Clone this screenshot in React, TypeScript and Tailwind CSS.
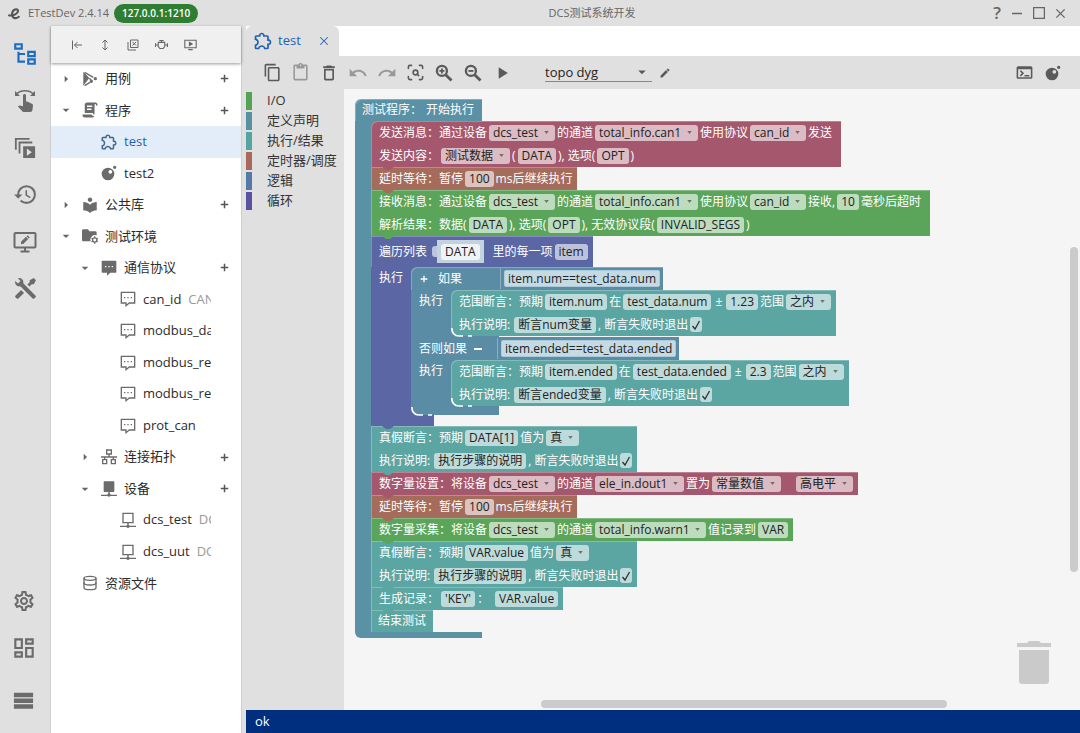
import React from "react";
import {
  MdArrowDropDown, MdArrowRight, MdContentCopy, MdContentPaste, MdDeleteOutline, MdEdit,
  MdHistory, MdLocalLibrary, MdOutlineDashboard, MdOutlineSettings, MdPlayArrow, MdRedo, MdSwipe,
  MdTerminal, MdUndo,
} from "react-icons/md";
import { LuDatabase, LuScanSearch } from "react-icons/lu";

type IconProps = { className?: string };

const Path = ({ d, className, rule }: IconProps & { d: string; rule?: "evenodd" }) => (
  <svg viewBox="0 0 24 24" className={className} fill="currentColor" aria-hidden="true">
    <path d={d} fillRule={rule} />
  </svg>
);

const Line = ({ className, children, w = 2 }: IconProps & { children: React.ReactNode; w?: number }) => (
  <svg viewBox="0 0 24 24" className={className} fill="none" stroke="currentColor" strokeWidth={w} aria-hidden="true">
    {children}
  </svg>
);

const Plus = (p: IconProps) => <Line {...p} w={4}><path d="M12 2v20M2 12h20" /></Line>;
const Magnify = ({ plus, ...p }: IconProps & { plus?: boolean }) => (
  <Line {...p}>
    <circle cx="9.500" cy="9.500" r="6" strokeWidth="2.800" />
    <path d="M14 14l7 7" strokeWidth="3.400" />
    <path d={plus ? "M6.500 9.500h6M9.500 6.500v6" : "M6.500 9.500h6"} strokeWidth="2.200" />
  </Line>
);
const Puzzle = (p: IconProps) => (
  <Path {...p} d="M22,13.5C22,15.26 20.7,16.72 19,16.96V20A2,2 0 0,1 17,22H13.2V21.7A2.7,2.7 0 0,0 10.5,19C9,19 7.8,20.21 7.8,21.7V22H4A2,2 0 0,1 2,20V16.2H2.3C3.79,16.2 5,15 5,13.5C5,12 3.79,10.8 2.3,10.8H2V7A2,2 0 0,1 4,5H7.04C7.28,3.3 8.74,2 10.5,2C12.26,2 13.72,3.3 13.96,5H17A2,2 0 0,1 19,7V10.04C20.7,10.28 22,11.74 22,13.5M17,15H18.5A1.5,1.5 0 0,0 20,13.5A1.5,1.5 0 0,0 18.5,12H17V7H12V5.5A1.5,1.5 0 0,0 10.5,4A1.5,1.5 0 0,0 9,5.5V7H4V9.12C5.76,9.8 7,11.5 7,13.5C7,15.5 5.75,17.2 4,17.88V20H6.12C6.8,18.25 8.5,17 10.5,17C12.5,17 14.2,18.25 14.88,20H17V15Z" />
);
const FileTree = (p: IconProps) => (
  <Path {...p} d="M12 13H7v5h5v2H5V10h2v1h5v2M8 4v2H4V4h4m2-2H2v6h8V2m10 9v2h-4v-2h4m2-2h-8v6h8V9m-2 9v2h-4v-2h4m2-2h-8v6h8v-6z" />
);
const PlayStack = (p: IconProps) => (
  <svg viewBox="0 0 24 24" className={p.className} fill="none" stroke="currentColor" strokeWidth="2" aria-hidden="true">
    <path d="M2 14V2h15M6 18V6h14" />
    <path fill="currentColor" stroke="none" fillRule="evenodd" d="M10 10h13v13H10zM14 12.500v8l5.500-4z" />
  </svg>
);
const MonitorEdit = (p: IconProps) => (
  <svg viewBox="0 0 24 24" className={p.className} fill="none" stroke="currentColor" strokeWidth="2" aria-hidden="true">
    <rect x="1.500" y="3" width="21" height="14.500" rx="1" />
    <path d="M12 17v4M7.500 21.500h9" />
    <path fill="currentColor" stroke="none" d="M8 14v-2.200l5-5 2.200 2.200-5 5zM13.600 6.200l1-1 2.200 2.200-1 1z" />
  </svg>
);
const Tools = (p: IconProps) => (
  <Path {...p} d="M21.71 20.29L20.29 21.71A1 1 0 0 1 18.88 21.71L7 9.85A3.81 3.81 0 0 1 6 10A4 4 0 0 1 2.22 4.7L4.76 7.24L5.29 6.71L6.71 5.29L7.24 4.76L4.7 2.22A4 4 0 0 1 10 6A3.81 3.81 0 0 1 9.85 7L21.71 18.88A1 1 0 0 1 21.71 20.29M2.29 18.88A1 1 0 0 0 2.29 20.29L3.71 21.71A1 1 0 0 0 5.12 21.71L10.59 16.25L7.76 13.42M20 2L16 4V6L13.83 8.17L15.83 10.17L18 8H20L22 4Z" />
);
const Bars = (p: IconProps) => <Path {...p} d="M2 4h20v4.500H2zM2 10h20v4.500H2zM2 16h20v4.500H2z" />;
const Cases = (p: IconProps) => (
  <svg viewBox="0 0 24 24" className={p.className} aria-hidden="true">
    <path fill="currentColor" d="M2 1l9 9.500L2 22z" />
    <path fill="none" stroke="currentColor" strokeWidth="2" d="M4 2l13 7.500M4 22l8-5M11 11l4 4" />
    <path fill="currentColor" d="M20 9a2.200 2.200 0 1 1 0 5 2.200 2.200 0 0 1 0-5zM14 13a2.200 2.200 0 1 1 0 5 2.200 2.200 0 0 1 0-5z" />
  </svg>
);
const Script = (p: IconProps) => (
  <Path {...p} d="M17.8 20C17.4 21.2 16.3 22 15 22H5C3.3 22 2 20.7 2 19V18H5L14.2 18C14.6 19.2 15.7 20 17 20H17.8M19 2C20.7 2 22 3.3 22 5V6H20V5C20 4.4 19.6 4 19 4S18 4.4 18 5V18H17C16.4 18 16 17.6 16 17V16H5V5C5 3.3 6.3 2 8 2H19M8 6V8H15V6H8M8 10V12H14V10H8Z" />
);
const Lua = (p: IconProps) => (
  <Path {...p} rule="evenodd" d="M10.500 4a9.500 9.500 0 1 0 0 19 9.500 9.500 0 0 0 0-19zM14 7.500a2.800 2.800 0 1 1 0 5.600 2.800 2.800 0 0 1 0-5.600zM20.500 1a2.500 2.500 0 1 0 0 5 2.500 2.500 0 0 0 0-5z" />
);
const FolderCog = (p: IconProps) => (
  <svg viewBox="0 0 24 24" className={p.className} aria-hidden="true">
    <path fill="currentColor" d="M2 2h7l2 3h9a2 2 0 0 1 2 2v4a7 7 0 0 0-9 9H2a2 2 0 0 1-2-2V4a2 2 0 0 1 2-2z" />
    <circle cx="19" cy="18" r="3.200" fill="none" stroke="currentColor" strokeWidth="2" />
    <path stroke="currentColor" strokeWidth="2" d="M19 12.500v2M19 21.500v2M14.300 15.300l1.700 1M22 19.700l1.700 1M14.300 20.700l1.700-1M22 16.300l1.700-1" />
  </svg>
);
const Message = (p: IconProps) => (
  <Path {...p} rule="evenodd" d="M2 1h20a1 1 0 0 1 1 1v16a1 1 0 0 1-1 1h-8l-5 4.500V19H2a1 1 0 0 1-1-1V2a1 1 0 0 1 1-1zM6 9v2h2V9zM11 9v2h2V9zM16 9v2h2V9z" />
);
const MessageOutline = (p: IconProps) => (
  <Line {...p}>
    <path d="M2 2h20v16h-8l-5 4v-4H2z" />
    <path d="M6 10h2M11 10h2M16 10h2" />
  </Line>
);
const Sitemap = (p: IconProps) => (
  <Line {...p}>
    <path d="M8.500 1.500h7v6h-7zM2.500 16h6v6h-6zM15.500 16h6v6h-6zM12 8v4M0 12h24M5.500 12v4M18.500 12v4" />
  </Line>
);
const Device = (p: IconProps) => (
  <svg viewBox="0 0 24 24" className={p.className} fill="currentColor" stroke="currentColor" strokeWidth="2" aria-hidden="true">
    <path d="M5 1.500h14v14H5z" strokeLinejoin="round" />
    <path d="M12 16v4M0 21.500h24" />
    <circle cx="12" cy="21" r="1.500" />
  </svg>
);
const DeviceOutline = (p: IconProps) => (
  <Line {...p}>
    <path d="M4.500 2h15v14h-15zM12 16v4M0 21.500h24" />
    <circle cx="12" cy="21.500" r="1.500" fill="currentColor" />
  </Line>
);
const Logo = (p: IconProps) => (
  <svg viewBox="0 0 24 24" className={p.className} fill="none" stroke="currentColor" strokeWidth="3.800" strokeLinecap="round" aria-hidden="true">
    <path d="M2 15.500C10 17 19 12 18.500 7 18 2 8 3.500 7.500 13 7.300 21 14 22.500 20 18" />
  </svg>
);

const CollapseLeft = (p: IconProps) => <Line {...p}><path d="M3 3v18M22 12H7M13 6l-6 6 6 6" /></Line>;
const ExpandY = (p: IconProps) => <Line {...p}><path d="M12 2v20M7 7l5-5 5 5M7 17l5 5 5-5" /></Line>;
const CloseBoxes = (p: IconProps) => <Line {...p}><path d="M7 2h15v15H7zM2 6v16h16M11 6l7 7M18 6l-7 7" /></Line>;
const Bug = (p: IconProps) => (
  <Line {...p}><path d="M8 4.500h8M12 5v3M6 8h12v8l-3 3.500H9L6 16zM6 13H2M1 9.500v7M18 13h4M23 9.500v7" /></Line>
);
const PlayMonitor = (p: IconProps) => (
  <Line {...p}><path d="M1.500 4h21v14h-21zM8 21.500h8" /><path d="M10 8l5 3-5 3z" fill="currentColor" /></Line>
);

/* ---------- tree ---------- */

type Node = {
  level: 0 | 1 | 2;
  icon: (p: IconProps) => React.ReactNode;
  label: string;
  open?: boolean;
  note?: string;
  add?: boolean;
  active?: boolean;
  padded?: boolean;
};

const nodes: Node[] = [
  { level: 0, icon: Cases, label: "用例", open: false, add: true },
  { level: 0, icon: Script, label: "程序", open: true, add: true, padded: true },
  { level: 1, icon: Puzzle, label: "test", active: true, padded: true },
  { level: 1, icon: Lua, label: "test2" },
  { level: 0, icon: (p) => <MdLocalLibrary {...p} />, label: "公共库", open: false, add: true, padded: true },
  { level: 0, icon: FolderCog, label: "测试环境", open: true },
  { level: 1, icon: Message, label: "通信协议", open: true, add: true },
  { level: 2, icon: MessageOutline, label: "can_id", note: "CAN" },
  { level: 2, icon: MessageOutline, label: "modbus_da" },
  { level: 2, icon: MessageOutline, label: "modbus_re" },
  { level: 2, icon: MessageOutline, label: "modbus_re" },
  { level: 2, icon: MessageOutline, label: "prot_can" },
  { level: 1, icon: Sitemap, label: "连接拓扑", open: false, add: true },
  { level: 1, icon: Device, label: "设备", open: true, add: true },
  { level: 2, icon: DeviceOutline, label: "dcs_test", note: "DCS" },
  { level: 2, icon: DeviceOutline, label: "dcs_uut", note: "DCS" },
  { level: 0, icon: (p) => <LuDatabase {...p} />, label: "资源文件" },
];
const indent = ["pl-[6px]", "pl-[25px]", "pl-[44px]"];

function TreeRow({ n }: { n: Node }) {
  return (
    <li className={`flex flex-1 items-center gap-[7px] pr-[11px] ${indent[n.level]} ${n.active ? "bg-[#e3edf9] text-[#1d62b5]" : "text-[#2b2b2b]"}`}>
      <span className="flex w-[18px] shrink-0 justify-center text-[#666]">
        {n.open === true && <MdArrowDropDown className="size-4" />}
        {n.open === false && <MdArrowRight className="size-4" />}
      </span>
      <span className={`shrink-0 ${n.active ? "text-[#44688f]" : "text-[#6b6b6b]"}`}>
        {n.icon({ className: n.padded ? "size-[18px] -mx-px" : "size-4" })}
      </span>
      <span className="min-w-0 flex-1 overflow-hidden whitespace-nowrap">
        {n.label}
        {n.note && <span className="ml-[7px] text-[#999]">{n.note}</span>}
      </span>
      {n.add ? (
        <button aria-label={`添加${n.label}`} className="flex w-3 shrink-0 justify-center text-[#555]"><Plus className="size-[9px]" /></button>
      ) : (
        <span className="w-3 shrink-0" />
      )}
    </li>
  );
}

/* ---------- blocks ---------- */

const tones = {
  start: { bg: "bg-[#5b91a5]", fill: "fill-[#5b91a5]" },
  send: { bg: "bg-[#a5586d]", fill: "fill-[#a5586d]" },
  wait: { bg: "bg-[#a56b5b]", fill: "fill-[#a56b5b]" },
  io: { bg: "bg-[#5ba55b]", fill: "fill-[#5ba55b]" },
  loop: { bg: "bg-[#5b67a5]", fill: "fill-[#5b67a5]" },
  logic: { bg: "bg-[#5b8ca5]", fill: "fill-[#5b8ca5]" },
  step: { bg: "bg-[#5ba5a2]", fill: "fill-[#5ba5a2]" },
};
type Tone = keyof typeof tones;

const edge = "shadow-[inset_1px_1px_0_rgba(255,255,255,0.25)]";

const T = ({ children }: { children: React.ReactNode }) => <span className="text-white">{children}</span>;

const Drop = ({ v, label = v }: { v: string; label?: string }) => (
  <span className="grid items-center">
    <select aria-label={label} defaultValue={v} className="col-start-1 row-start-1 h-4 appearance-none rounded-[3px] bg-white/60 pr-4 pl-1 leading-4 text-[#222]">
      <option>{v}</option>
    </select>
    <svg viewBox="0 0 6 4" className="pointer-events-none col-start-1 row-start-1 mr-[6px] h-[3px] w-[5px] justify-self-end fill-black/45" aria-hidden="true">
      <path d="M0 0h6L3 4z" />
    </svg>
  </span>
);

const Field = ({ v, label = v }: { v: string; label?: string }) => (
  <input aria-label={label} defaultValue={v} className="field-sizing-content h-4 rounded-[3px] bg-white/60 px-1 leading-4 text-[#222]" />
);

const Check = () => (
  <span className="grid place-items-center">
    <input type="checkbox" defaultChecked aria-label="断言失败时退出" className="col-start-1 row-start-1 h-[15px] w-3 appearance-none rounded-[3px] bg-white/60" />
    <svg viewBox="0 0 12 12" className="pointer-events-none col-start-1 row-start-1 size-3 fill-none stroke-[#333]" aria-hidden="true">
      <path d="M2.500 7l2.500 3L9.500 2" strokeWidth="1.300" />
    </svg>
  </span>
);

const Notch = ({ tone }: { tone: Tone }) => (
  <svg viewBox="0 0 12 3" className={`absolute -bottom-[3px] left-[11px] z-10 h-[3px] w-3 ${tones[tone].fill}`} aria-hidden="true">
    <path d="M0 0h12L8 3H4z" />
  </svg>
);

const Shine = () => (
  <svg viewBox="0 0 22 9" className="absolute -bottom-[1px] left-0 z-10 h-[9px] w-[22px] fill-none stroke-white" strokeWidth="1.600" aria-hidden="true">
    <path d="M.8 0Q1 7.800 8 8H12M17 8H21" />
  </svg>
);

const Row = ({ children, className = "h-[23px]" }: { children: React.ReactNode; className?: string }) => (
  <div className={`flex items-center gap-[2px] whitespace-nowrap ${className}`}>{children}</div>
);

type BlockProps = { tone: Tone; under?: Tone; last?: boolean; wide?: boolean; children: React.ReactNode };

function Block({ tone, under, last, wide, children }: BlockProps) {
  return (
    <div className={`relative ${under ? tones[under].bg : ""}`}>
      <div className={`pl-2 ${wide ? "pr-[9px]" : "pr-[5px]"} ${tones[tone].bg} ${edge} ${under ? "rounded-tl-md" : ""} ${last ? "rounded-bl-md" : ""}`}>{children}</div>
      {!last && <Notch tone={tone} />}
      {last && <Shine />}
    </div>
  );
}

function RangeAssert({ expect, target, range, note }: { expect: string; target: string; range: string; note: string }) {
  return (
    <Block tone="step" under="logic" last>
      <Row><T>范围断言：预期</T><Field v={expect} /><T>在</T><Field v={target} /><span className="px-[2px] text-white">±</span><Field v={range} /><T>范围</T><Drop v="之内" /></Row>
      <Row><T>执行说明:</T><span /><Field v={note} /><T>, 断言失败时退出</T><Check /></Row>
    </Block>
  );
}

function BoolAssert({ expect }: { expect: string }) {
  return (
    <Block tone="step">
      <Row><T>真假断言：预期</T><Field v={expect} /><T>值为</T><Drop v="真" /></Row>
      <Row><T>执行说明:</T><span /><Field v="执行步骤的说明" /><T>, 断言失败时退出</T><Check /></Row>
    </Block>
  );
}

const Wait = () => (
  <Block tone="wait"><Row><T>延时等待：暂停</T><Field v="100" label="毫秒" /><T>ms后继续执行</T></Row></Block>
);

const ValueSlot = ({ v }: { v: string }) => (
  <span className="flex h-[21px] items-center border-l border-white/30 px-[3px]">
    <input aria-label={v} defaultValue={v} className="field-sizing-content h-[17px] rounded-[2px] border border-[#a9cbdd] bg-[#c6dae3] px-[3px] leading-4 text-[#222]" />
  </span>
);

const Branch = ({ children }: { children: React.ReactNode }) => (
  <div className="flex">
    <div className={`w-10 pl-2 leading-[22px] text-white ${tones.logic.bg}`}>执行</div>
    <div>{children}</div>
  </div>
);

function IfBlock() {
  return (
    <div className="flex flex-col items-start">
      <div className={tones.loop.bg}>
        <div className={`rounded-tl-md pl-2 ${tones.logic.bg} ${edge}`}>
          <Row>
            <button aria-label="添加分支" className="flex w-[17px] pl-px text-white"><Plus className="size-2" /></button>
            <T>如果</T><span className="w-[34px]" /><ValueSlot v="item.num==test_data.num" />
          </Row>
        </div>
      </div>
      <Branch><RangeAssert expect="item.num" target="test_data.num" range="1.23" note="断言num变量" /></Branch>
      <div className={`h-px w-[88px] ${tones.logic.bg}`} />
      <div className={`pl-2 ${tones.logic.bg}`}>
        <Row>
          <T>否则如果</T>
          <button aria-label="删除分支" className="flex h-3 w-[18px] items-center justify-center"><span className="h-[2px] w-2 bg-white" /></button>
          <span className="w-[6px]" /><ValueSlot v="item.ended==test_data.ended" />
        </Row>
      </div>
      <Branch><RangeAssert expect="item.ended" target="test_data.ended" range="2.3" note="断言ended变量" /></Branch>
      <div className={`relative w-[88px] ${tones.loop.bg}`}>
        <div className={`h-[9px] rounded-bl-md ${tones.logic.bg}`} />
        <Shine />
      </div>
    </div>
  );
}

function Program() {
  return (
    <div className="flex w-max flex-col items-start text-[12px]">
      <div className={`flex h-[22px] w-[127px] items-center rounded-tl-md pl-[7px] whitespace-nowrap ${tones.start.bg} ${edge}`}>
        <T>测试程序：</T><span className="ml-1 text-white">开始执行</span>
      </div>
      <div className="flex">
        <div className={`w-4 ${tones.start.bg}`} />
        <div className="flex flex-col items-start">
          <Block tone="send" under="start" wide>
            <Row><T>发送消息：通过设备</T><Drop v="dcs_test" /><T>的通道</T><Drop v="total_info.can1" /><T>使用协议</T><Drop v="can_id" /><T>发送</T></Row>
            <Row><T>发送内容：</T><Drop v="测试数据" /><T>(</T><Field v="DATA" /><T>), 选项(</T><Field v="OPT" /><T>)</T></Row>
          </Block>
          <Wait />
          <Block tone="io" wide>
            <Row><T>接收消息：通过设备</T><Drop v="dcs_test" /><T>的通道</T><Drop v="total_info.can1" /><T>使用协议</T><Drop v="can_id" /><T>接收,</T><Field v="10" /><T>毫秒后超时</T></Row>
            <Row><T>解析结果：数据(</T><Field v="DATA" /><T>), 选项(</T><Field v="OPT" /><T>), 无效协议段(</T><Field v="INVALID_SEGS" /><T>)</T></Row>
          </Block>
          <div className={`pr-[5px] pl-2 ${tones.loop.bg} ${edge}`}>
            <Row className="h-[31px]">
              <T>遍历列表</T>
              <span className="ml-[3px] flex items-center">
                <span className="h-[11px] w-[5px] rounded-l-[3px] bg-[#b9c6dc]" />
                <span className="flex h-[23px] items-center bg-[#c3d2de] px-1">
                  <input aria-label="列表" defaultValue="DATA" className="field-sizing-content h-4 rounded-[3px] bg-[#eef3f6] px-1 leading-4 text-[#222]" />
                </span>
              </span>
              <span className="ml-[7px] text-white">里的每一项</span>
              <Field v="item" />
            </Row>
          </div>
          <div className="flex">
            <div className={`w-10 pl-2 leading-[22px] text-white ${tones.loop.bg}`}>执行</div>
            <IfBlock />
          </div>
          <div className="relative">
            <div className={`h-[11px] w-[63px] ${tones.loop.bg}`} />
            <Notch tone="loop" />
          </div>
          <BoolAssert expect="DATA[1]" />
          <Block tone="send">
            <Row><T>数字量设置：将设备</T><Drop v="dcs_test" /><T>的通道</T><Drop v="ele_in.dout1" /><T>置为</T><Drop v="常量数值" /><span className="w-[11px]" /><Drop v="高电平" /></Row>
          </Block>
          <Wait />
          <Block tone="io">
            <Row><T>数字量采集：将设备</T><Drop v="dcs_test" /><T>的通道</T><Drop v="total_info.warn1" /><T>值记录到</T><Field v="VAR" /></Row>
          </Block>
          <BoolAssert expect="VAR.value" />
          <Block tone="step"><Row><T>生成记录：</T><Field v="'KEY'" /><span className="pr-1 text-white">：</span><Field v="VAR.value" /></Row></Block>
          <div className={`px-[7px] ${tones.step.bg} ${edge}`}><Row className="h-[22px]"><T>结束测试</T></Row></div>
        </div>
      </div>
      <div className={`h-[6px] w-[127px] rounded-bl-md ${tones.start.bg}`} />
    </div>
  );
}

/* ---------- shell ---------- */

const palette = [
  { name: "I/O", bar: "bg-[#52a352]" },
  { name: "定义声明", bar: "bg-[#5590a3]" },
  { name: "执行/结果", bar: "bg-[#52a5a3]" },
  { name: "定时器/调度", bar: "bg-[#a8695a]" },
  { name: "逻辑", bar: "bg-[#5279a8]" },
  { name: "循环", bar: "bg-[#5852a0]" },
];

const RailButton = ({ label, children, className = "" }: { label: string; children: React.ReactNode; className?: string }) => (
  <button aria-label={label} className={`flex h-[47px] w-full items-center justify-center ${className}`}>{children}</button>
);

export default function App() {
  return (
    <div className="flex min-h-screen flex-col bg-[#e0e0e0] font-['Open_Sans','Noto_Sans_CJK_SC',sans-serif] text-[13px] text-[#222]">
      <header className="grid h-[26px] shrink-0 grid-cols-[1fr_auto_1fr] items-center text-[11px] text-[#666]">
        <div className="flex items-center gap-[7px] pl-2">
          <Logo className="size-[13px] text-[#555]" />
          <span>ETestDev 2.4.14</span>
          <span className="-ml-[2px] flex h-[19px] items-center rounded-full bg-[#2e7d32] px-2 text-[10px] font-semibold text-white">127.0.0.1:1210</span>
        </div>
        <h1 className="pl-[104px]">DCS测试系统开发</h1>
        <div className="flex items-center justify-end gap-[10px] pr-[14px]">
          <button aria-label="帮助" className="text-[17px] leading-5 font-semibold">?</button>
          <button aria-label="最小化"><Line className="size-3"><path d="M2 13h20" strokeWidth="3" /></Line></button>
          <button aria-label="最大化"><Line className="size-3"><path d="M1 1h22v22H1z" strokeWidth="3" /></Line></button>
          <button aria-label="关闭"><Line className="size-[11px]"><path d="M3 3l18 18M21 3L3 21" strokeWidth="3" /></Line></button>
        </div>
      </header>

      <div className="flex flex-1">
        <nav className="flex w-[50px] shrink-0 flex-col pt-1 text-[#6b6b6b]">
          <RailButton label="工程" className="text-[#1d6cc4]"><FileTree className="size-[26px]" /></RailButton>
          <RailButton label="手动"><MdSwipe className="size-6" /></RailButton>
          <RailButton label="执行"><PlayStack className="size-[22px]" /></RailButton>
          <RailButton label="历史"><MdHistory className="size-[25px]" /></RailButton>
          <RailButton label="监控"><MonitorEdit className="size-6" /></RailButton>
          <RailButton label="工具"><Tools className="size-[25px]" /></RailButton>
          <div className="mt-auto pr-[3px] pb-[9px]">
            <RailButton label="设置"><MdOutlineSettings className="size-6" /></RailButton>
            <RailButton label="面板"><MdOutlineDashboard className="size-[26px]" /></RailButton>
            <RailButton label="菜单" className="mt-[6px]"><Bars className="size-[23px]" /></RailButton>
          </div>
        </nav>

        <aside className="flex w-[192px] shrink-0 flex-col border-x border-[#cfcfcf] bg-white">
          <div className="flex h-[37px] items-center gap-4 bg-[#f0f0f0] pl-5 text-[#666] shadow-[0_1px_3px_rgba(0,0,0,0.4)]">
            <button aria-label="折叠"><CollapseLeft className="size-3" /></button>
            <button aria-label="展开"><ExpandY className="size-3" /></button>
            <button aria-label="全部关闭"><CloseBoxes className="size-3" /></button>
            <button aria-label="调试"><Bug className="size-[13px]" /></button>
            <button aria-label="运行"><PlayMonitor className="size-[13px]" /></button>
          </div>
          <ul className="flex h-[536px] flex-col">
            {nodes.map((n, i) => <TreeRow key={i} n={n} />)}
          </ul>
        </aside>

        <main className="ml-1 flex min-w-0 flex-1 flex-col">
          <div className="flex h-[30px] bg-white">
            <div className="flex w-[93px] items-center rounded-t-md bg-[#e0e0e0] pl-[7px] text-[#1d62b5]">
              <Puzzle className="size-5" />
              <span className="ml-[5px]">test</span>
              <button aria-label="关闭标签" className="ml-auto pr-[10px]"><Line className="size-[10px]"><path d="M3 3l18 18M21 3L3 21" strokeWidth="2.500" /></Line></button>
            </div>
          </div>
          <div className="flex h-[33px] items-center pr-[19px] pl-[17px] text-[#5a5a5a]">
            <div className="flex items-center gap-[9px]">
              <button aria-label="复制"><MdContentCopy className="size-[19px]" /></button>
              <button aria-label="粘贴" className="text-[#999]"><MdContentPaste className="size-[19px]" /></button>
              <button aria-label="删除"><MdDeleteOutline className="size-5" /></button>
              <button aria-label="撤销" className="text-[#999]"><MdUndo className="size-5" /></button>
              <button aria-label="重做" className="text-[#999]"><MdRedo className="size-5" /></button>
              <button aria-label="适应窗口"><LuScanSearch className="size-[19px]" /></button>
              <button aria-label="放大"><Magnify plus className="size-5" /></button>
              <button aria-label="缩小"><Magnify className="size-5" /></button>
              <button aria-label="运行程序"><MdPlayArrow className="size-5" /></button>
            </div>
            <div className="ml-[33px] grid w-[107px] items-center border-b border-[#888]">
              <select aria-label="拓扑" defaultValue="topo dyg" className="col-start-1 row-start-1 h-[18px] appearance-none leading-[18px] text-[#222]">
                <option>topo dyg</option>
              </select>
              <MdArrowDropDown className="pointer-events-none col-start-1 row-start-1 mr-px size-[18px] justify-self-end" />
            </div>
            <button aria-label="编辑拓扑" className="ml-[7px]"><MdEdit className="size-3" /></button>
            <div className="ml-auto flex items-center gap-[11px]">
              <button aria-label="终端"><MdTerminal className="size-[19px]" /></button>
              <button aria-label="脚本"><Lua className="size-4" /></button>
            </div>
          </div>
          <div className="flex flex-1">
            <ul className="w-[98px] shrink-0 pt-[2px] whitespace-nowrap text-[#333]">
              {palette.map((p) => (
                <li key={p.name} className="flex h-5 items-center">
                  <span className={`h-[18px] w-[6px] ${p.bar}`} />
                  <a href="#" className="ml-[15px]">{p.name}</a>
                </li>
              ))}
            </ul>
            <section className="relative min-w-0 flex-1 bg-[#f5f5f5] pt-[10px] pb-6 pl-[11px]">
              <Program />
              <div className="absolute top-[158px] right-[2px] h-[325px] w-2 rounded-full bg-[#cbcbcd]" />
              <div className="absolute right-[133px] bottom-[2px] h-2 w-[406px] rounded-full bg-[#cbcbcd]" />
              <svg viewBox="0 0 34 44" className="absolute right-[29px] bottom-[26px] h-11 w-[34px] fill-[#cacaca]" aria-label="垃圾桶">
                <path d="M0 3h10l2-2h10l2 2h10v4H0zM2 10h30v31q0 3-3 3H5q-3 0-3-3z" />
              </svg>
            </section>
          </div>
          <footer className="flex h-[23px] items-center bg-[#002f80] pl-[9px] text-white">ok</footer>
        </main>
      </div>
    </div>
  );
}
